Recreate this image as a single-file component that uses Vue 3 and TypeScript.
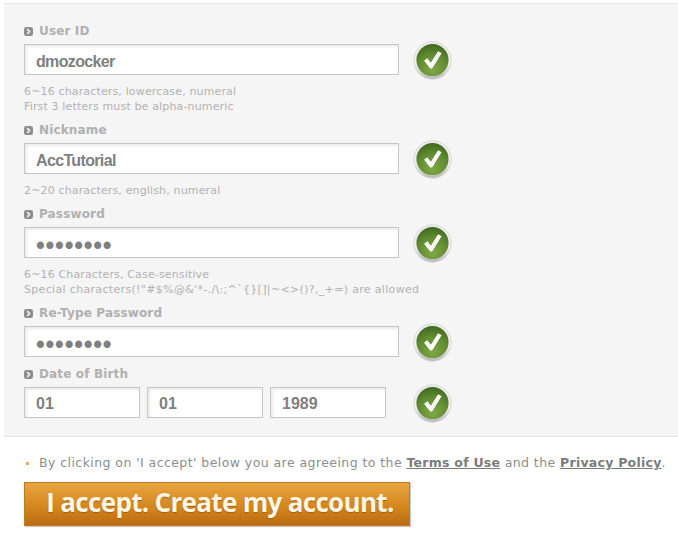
<script setup lang="ts">
interface Field { label: string; value: string; secret?: boolean; hints: string[]; gap: string }
const fields: Field[] = [
  { label: 'User ID', value: 'dmozocker', hints: ['6~16 characters, lowercase, numeral', 'First 3 letters must be alpha-numeric'], gap: 'g1' },
  { label: 'Nickname', value: 'AccTutorial', hints: ['2~20 characters, english, numeral'], gap: 'g2' },
  { label: 'Password', value: '••••••••', secret: true, hints: ['6~16 Characters, Case-sensitive', 'Special characters(!"#$%@&\'*-./\\:;^`{}[]|~<>()?,_+=) are allowed'], gap: 'g3' },
  { label: 'Re-Type Password', value: '••••••••', secret: true, hints: [], gap: 'g4' },
]
const dob = ['01', '01', '1989']
</script>

<template>
  <div class="page">
    <section class="panel">
      <div v-for="f in fields" :key="f.label" class="field" :class="f.gap">
        <div class="label"><svg class="bullet" viewBox="0 0 10 10" aria-hidden="true"><rect width="10" height="10" rx="2.5" fill="#8e8e8e"/><path d="M3.6 2.4 L6.2 5 L3.6 7.6" fill="none" stroke="#f4f4f4" stroke-width="1.7"/></svg>{{ f.label }}</div>
        <div class="row">
          <div class="input wide" :class="{ secret: f.secret }"><span>{{ f.value }}</span></div>
          <svg class="check" viewBox="0 0 40 40" aria-hidden="true">
            <defs>
              <linearGradient id="ring" x1="0" y1="0" x2="0" y2="1"><stop offset="0" stop-color="#ececec"/><stop offset="0.6" stop-color="#f0f0f0"/><stop offset="1" stop-color="#b8b8b8"/></linearGradient>
              <radialGradient id="ball" cx="0.5" cy="0.8" r="0.8"><stop offset="0" stop-color="#7fa845"/><stop offset="0.6" stop-color="#5f8a30"/><stop offset="1" stop-color="#40681f"/></radialGradient>
            </defs>
            <circle cx="20" cy="20" r="19.2" fill="url(#ring)" stroke="#d2d2d2" stroke-width="0.8"/>
            <circle cx="20" cy="19.5" r="16.5" fill="url(#ball)"/>
            <path d="M13 19 L18.5 26 L27.5 11.5" fill="none" stroke="#fff" stroke-width="4.2" stroke-linejoin="round"/>
          </svg>
        </div>
        <div v-if="f.hints.length" class="hints">
          <div v-for="h in f.hints" :key="h" :class="{ long: h.length > 50 }">{{ h }}</div>
        </div>
      </div>
      <div class="field">
        <div class="label"><svg class="bullet" viewBox="0 0 10 10" aria-hidden="true"><rect width="10" height="10" rx="2.5" fill="#8e8e8e"/><path d="M3.6 2.4 L6.2 5 L3.6 7.6" fill="none" stroke="#f4f4f4" stroke-width="1.7"/></svg>Date of Birth</div>
        <div class="row dates">
          <div v-for="(d, i) in dob" :key="i" class="input date">{{ d }}</div>
          <svg class="check" viewBox="0 0 40 40" aria-hidden="true">
            <circle cx="20" cy="20" r="19.2" fill="url(#ring)" stroke="#d2d2d2" stroke-width="0.8"/>
            <circle cx="20" cy="19.5" r="16.5" fill="url(#ball)"/>
            <path d="M13 19 L18.5 26 L27.5 11.5" fill="none" stroke="#fff" stroke-width="4.2" stroke-linejoin="round"/>
          </svg>
        </div>
      </div>
    </section>
    <p class="terms"><span class="dot"></span>By clicking on 'I accept' below you are agreeing to the <a>Terms of Use</a> and the <a>Privacy Policy</a>.</p>
    <button class="accept" type="button">I accept. Create my account.</button>
  </div>
</template>

<style>
html, body { margin: 0; background: #fff; }
</style>

<style scoped>
.page { width: 678px; height: 536px; overflow: hidden; box-sizing: border-box; padding-top: 3px; font-family: "DejaVu Sans", Verdana, sans-serif; }
.panel { margin-left: 4px; height: 434px; box-sizing: border-box; padding: 19px 0 0 20px; background: #f5f5f5; border-top: 1px solid #e6e6e6; border-bottom: 1px solid #e3e3e3; }
.field.g1 { height: 99px; }
.field.g2 { height: 84px; }
.field.g3 { height: 99px; }
.field.g4 { height: 61px; }
.label { height: 16px; margin-bottom: 5px; display: flex; align-items: center; gap: 6px; font: bold 12px "DejaVu Sans", Verdana, sans-serif; letter-spacing: 0.15px; color: #b0b0b0; }
.bullet { width: 9px; height: 9px; flex: none; }
.row { display: flex; align-items: center; height: 31px; }
.input { height: 31px; box-sizing: border-box; background: #fff; border: 1px solid #c6c6c6; box-shadow: inset 2px 2px 3px #ebebeb; font: bold 16px/33px "Liberation Sans", Arial, sans-serif; letter-spacing: -0.65px; color: #808080; padding-left: 11px; }
.input.wide { width: 375px; margin-right: 14px; }
.input.secret { font-size: 25px; letter-spacing: 0.8px; line-height: 34px; }
.input.date { width: 116px; margin-right: 7px; letter-spacing: 0; line-height: 32px; }
.dates .check { margin-left: 20px; }
.check { width: 39px; height: 39px; flex: none; margin-top: 2px; }
.hints { margin-top: 10px; font-size: 11px; line-height: 14.5px; color: #b2b2b2; letter-spacing: 0.15px; }
.hints .long { letter-spacing: 0.33px; }
.terms { margin: 17px 0 0 26px; height: 18px; font-size: 12.5px; line-height: 18px; letter-spacing: 0.43px; color: #8e8e8e; display: flex; align-items: center; white-space: pre-wrap; }
.dot { width: 3px; height: 3px; background: #e0b060; margin-right: 10px; }
.terms a { font-weight: bold; text-decoration: underline; color: #7c7c7c; letter-spacing: 0.25px; }
.accept { display: block; margin: 10px 0 0 24px; width: 386px; height: 44px; padding: 0 0 4px 6px; border: 1px solid #c27a1e; background: linear-gradient(#eaa540, #d5871f 55%, #bb6d12); color: #fff6e6; font: 700 26px/36px "Open Sans", sans-serif; letter-spacing: -0.68px; text-shadow: 0 1px 1px #a06010; box-shadow: 1px 1px 1px #ccc; }
</style>
